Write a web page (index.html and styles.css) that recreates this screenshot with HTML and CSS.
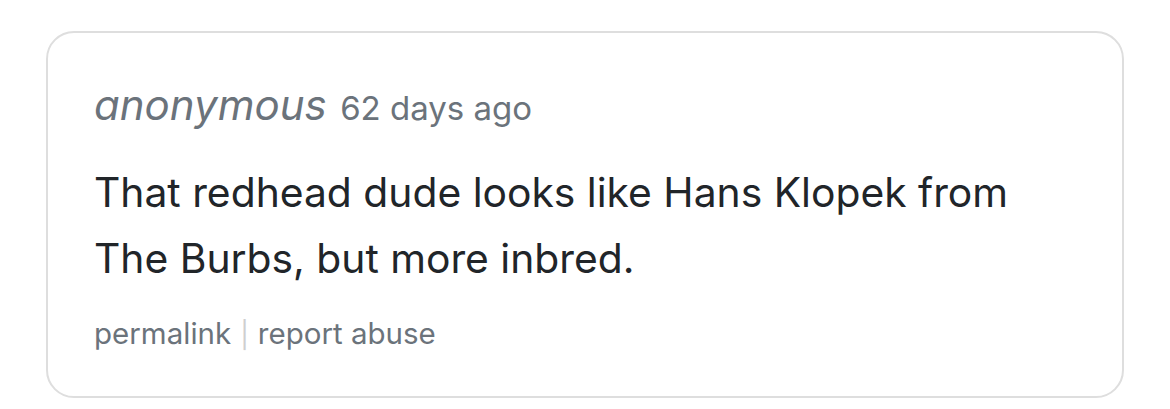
FILE: index.html
```html
<!DOCTYPE html>
<html>
<head><meta charset="utf-8"><link rel="stylesheet" href="styles.css"></head>
<body>
<div class="card">
  <div class="meta"><span class="author">anonymous</span> <span class="time">62 days ago</span></div>
  <p class="body">That redhead dude looks like Hans Klopek from The Burbs, but more inbred.</p>
  <div class="links"><a class="link">permalink</a><span class="sep">|</span><a class="link">report abuse</a></div>
</div>
</body>
</html>
```
FILE: styles.css
```css
html, body { margin: 0; padding: 0; background: #fff; }
body { padding: 31px 46px 0 46px; font-family: Inter, "Liberation Sans", sans-serif; }
.card {
  border: 2px solid #dedede;
  border-radius: 28px;
  height: 367px;
  box-sizing: border-box;
  padding: 47px 46px 0 46px;
}
.meta { color: #6b737b; line-height: 50px; white-space: nowrap; }
.author { font-style: italic; font-size: 42px; }
.time { font-size: 33px; margin-left: 9px; }
.body { margin: 20px 0 0 0; font-size: 40.8px; line-height: 66px; color: #212529; max-width: 950px; }
.links { margin-top: 22px; font-size: 29.5px; line-height: 40px; color: #6b737b; }
.sep { color: #cfcfcf; margin: 0 9px; font-size: 26px; }
```
